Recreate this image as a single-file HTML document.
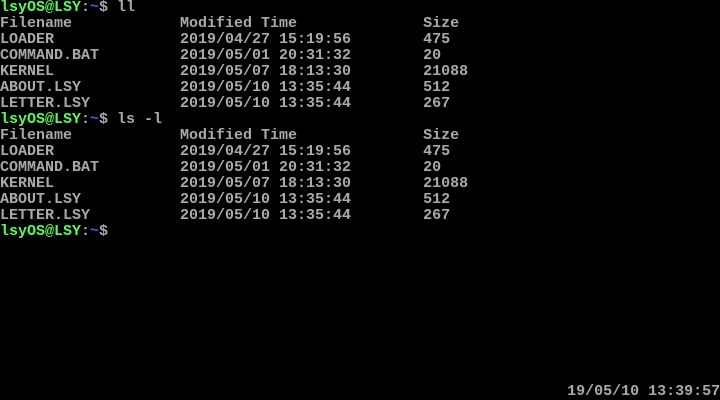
<!DOCTYPE html><html><head><style>
html,body{margin:0;padding:0;background:#000;width:720px;height:400px;overflow:hidden}
pre{margin:0;font-family:"Liberation Mono",monospace;font-size:15px;font-weight:bold;line-height:16px;color:#aaa;white-space:pre;position:absolute;left:0;top:0}
.g{color:#55ff55}.b{color:#5555ff}
</style></head><body><pre><span class="g">lsyOS@LSY</span>:<span class="b">~</span>$ ll
Filename            Modified Time              Size
LOADER              2019/04/27 15:19:56        475
COMMAND.BAT         2019/05/01 20:31:32        20
KERNEL              2019/05/07 18:13:30        21088
ABOUT.LSY           2019/05/10 13:35:44        512
LETTER.LSY          2019/05/10 13:35:44        267
<span class="g">lsyOS@LSY</span>:<span class="b">~</span>$ ls -l
Filename            Modified Time              Size
LOADER              2019/04/27 15:19:56        475
COMMAND.BAT         2019/05/01 20:31:32        20
KERNEL              2019/05/07 18:13:30        21088
ABOUT.LSY           2019/05/10 13:35:44        512
LETTER.LSY          2019/05/10 13:35:44        267
<span class="g">lsyOS@LSY</span>:<span class="b">~</span>$









                                                               19/05/10 13:39:57</pre></body></html>
